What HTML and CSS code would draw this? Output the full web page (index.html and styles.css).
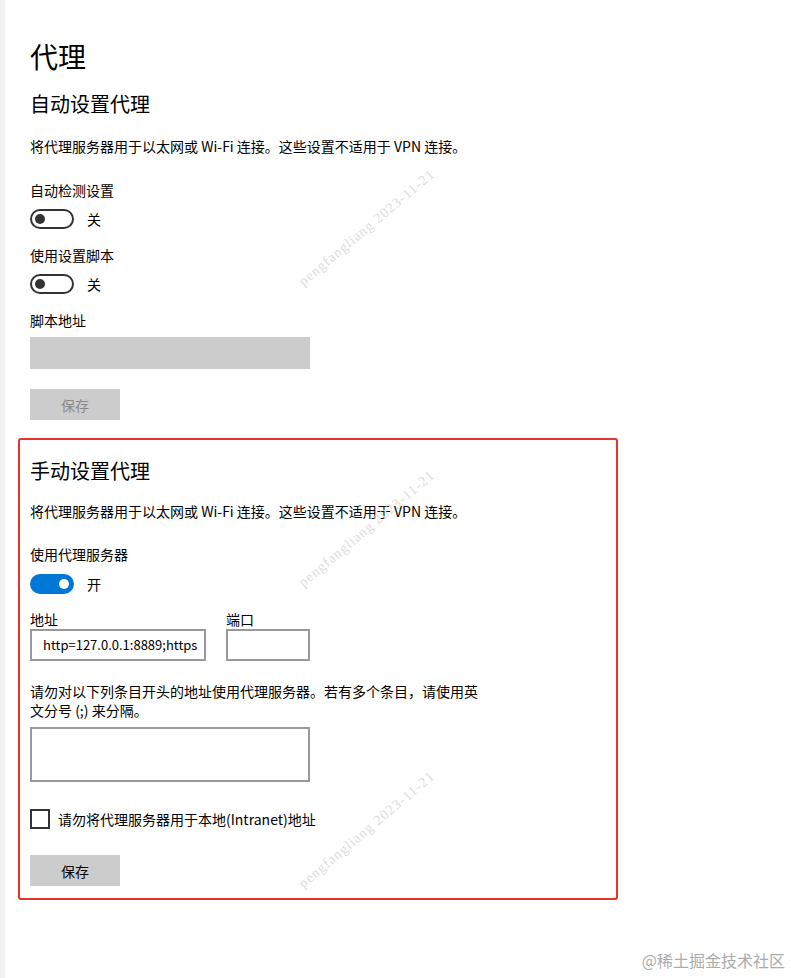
FILE: index.html
```html
<!DOCTYPE html>
<html lang="zh-CN">
<head>
    <meta charset="UTF-8">
    <meta name="viewport" content="width=device-width, initial-scale=1.0">
    <title>代理</title>
    <link rel="stylesheet" href="styles.css">
</head>
<body>
    <div class="pagina">
        <h1 class="titulo">代理</h1>

        <!-- Configuración automática -->
        <h2 class="subtitulo">自动设置代理</h2>
        <p class="descripcion">将代理服务器用于以太网或 Wi-Fi 连接。这些设置不适用于 VPN 连接。</p>

        <div class="etiqueta etiqueta-primera">自动检测设置</div>
        <div class="interruptor-fila">
            <span class="interruptor"><span class="perilla"></span></span>
            <span class="estado">关</span>
        </div>

        <div class="etiqueta">使用设置脚本</div>
        <div class="interruptor-fila">
            <span class="interruptor"><span class="perilla"></span></span>
            <span class="estado">关</span>
        </div>

        <div class="etiqueta">脚本地址</div>
        <div class="campo-deshabilitado"></div>
        <button class="boton boton-deshabilitado">保存</button>

        <!-- Configuración manual -->
        <div class="manual">
            <h2 class="subtitulo">手动设置代理</h2>
            <p class="descripcion">将代理服务器用于以太网或 Wi-Fi 连接。这些设置不适用于 VPN 连接。</p>

            <div class="etiqueta etiqueta-primera">使用代理服务器</div>
            <div class="interruptor-fila">
                <span class="interruptor activo"><span class="perilla"></span></span>
                <span class="estado">开</span>
            </div>

            <div class="direccion-fila">
                <div class="direccion-col">
                    <div class="etiqueta-campo">地址</div>
                    <div class="campo campo-direccion">http=127.0.0.1:8889;https</div>
                </div>
                <div class="puerto-col">
                    <div class="etiqueta-campo">端口</div>
                    <div class="campo campo-puerto"></div>
                </div>
            </div>

            <p class="excepciones">请勿对以下列条目开头的地址使用代理服务器。若有多个条目，请使用英文分号 (;) 来分隔。</p>
            <div class="area-texto"></div>

            <div class="casilla-fila">
                <span class="casilla"></span>
                <span>请勿将代理服务器用于本地(Intranet)地址</span>
            </div>

            <button class="boton">保存</button>
        </div>
    </div>

    <div class="marca marca-1">pengfangliang 2023-11-21</div>
    <div class="marca marca-2">pengfangliang 2023-11-21</div>
    <div class="marca marca-3">pengfangliang 2023-11-21</div>

    <div class="firma">@稀土掘金技术社区</div>
</body>
</html>
```

FILE: styles.css
```css
body {
    font-family: "Noto Sans CJK SC", "Noto Sans", sans-serif;
    margin: 0;
    background-color: #ffffff;
    color: #000000;
    border-left: 5px solid #f2f2f2;
    min-height: 978px;
    box-sizing: border-box;
    position: relative;
}

.pagina {
    padding: 36px 0 0 25px;
}

.titulo {
    font-size: 28px;
    font-weight: normal;
    line-height: 40px;
    margin: 0;
}

.subtitulo {
    font-size: 20px;
    font-weight: normal;
    line-height: 28px;
    margin: 14px 0 0 0;
}

.descripcion {
    font-size: 14px;
    line-height: 20px;
    margin: 18px 0 0 0;
}

.etiqueta {
    font-size: 14px;
    line-height: 20px;
    margin-top: 16px;
}

.etiqueta-primera {
    margin-top: 24px;
}

.interruptor-fila {
    display: flex;
    align-items: center;
    gap: 13px;
    margin-top: 9px;
    font-size: 14px;
    height: 20px;
}

.interruptor {
    width: 44px;
    height: 20px;
    box-sizing: border-box;
    border: 2px solid #333333;
    border-radius: 10px;
    display: flex;
    align-items: center;
    padding: 0 3px;
}

.perilla {
    width: 10px;
    height: 10px;
    border-radius: 50%;
    background-color: #333333;
}

.interruptor.activo {
    background-color: #0078d7;
    border-color: #0078d7;
    justify-content: flex-end;
}

.interruptor.activo .perilla {
    background-color: #ffffff;
}

.campo-deshabilitado {
    width: 280px;
    height: 32px;
    background-color: #cccccc;
    margin-top: 7px;
}

.boton {
    display: block;
    width: 90px;
    height: 31px;
    border: none;
    background-color: #cccccc;
    font-family: inherit;
    font-size: 14px;
    color: #000000;
    margin-top: 20px;
    padding: 0;
}

.boton-deshabilitado {
    color: #8a8a8a;
}

.manual {
    width: 600px;
    box-sizing: border-box;
    margin: 18px 0 0 -12px;
    padding: 17px 10px 12px 10px;
    border: 2px solid #e8332c;
    border-radius: 3px;
}

.manual .subtitulo {
    margin-top: 0;
}

.manual .descripcion {
    margin-top: 16px;
}

.manual .etiqueta-primera {
    margin-top: 23px;
}

.manual .interruptor-fila {
    margin-top: 10px;
}

.direccion-fila {
    display: flex;
    gap: 20px;
    margin-top: 17px;
}

.etiqueta-campo {
    font-size: 14px;
    line-height: 16px;
    margin-bottom: 2px;
}

.campo {
    height: 32px;
    box-sizing: border-box;
    border: 2px solid #999999;
    font-size: 13px;
    line-height: 28px;
    padding: 0 0 0 11px;
    white-space: nowrap;
    overflow: hidden;
}

.campo-direccion {
    width: 176px;
}

.campo-puerto {
    width: 84px;
}

.excepciones {
    font-size: 14px;
    line-height: 19px;
    width: 455px;
    margin: 21px 0 0 0;
}

.area-texto {
    width: 280px;
    height: 55px;
    box-sizing: border-box;
    border: 2px solid #999999;
    margin-top: 7px;
}

.casilla-fila {
    display: flex;
    align-items: center;
    gap: 8px;
    margin-top: 27px;
    height: 20px;
    font-size: 14px;
}

.casilla {
    width: 20px;
    height: 20px;
    box-sizing: border-box;
    border: 2px solid #333333;
}

.manual .boton {
    margin-top: 26px;
}

.marca {
    position: absolute;
    font-family: "Liberation Serif", serif;
    font-size: 14px;
    letter-spacing: 1px;
    color: #dcdcdc;
    white-space: nowrap;
    transform: rotate(-40deg);
    width: 190px;
    text-align: center;
    left: 267px;
}

.marca-1 { top: 220px; }
.marca-2 { top: 521px; }
.marca-3 { top: 822px; }

.firma {
    position: absolute;
    right: 6px;
    bottom: 6px;
    font-size: 16px;
    color: #ababab;
}
```
